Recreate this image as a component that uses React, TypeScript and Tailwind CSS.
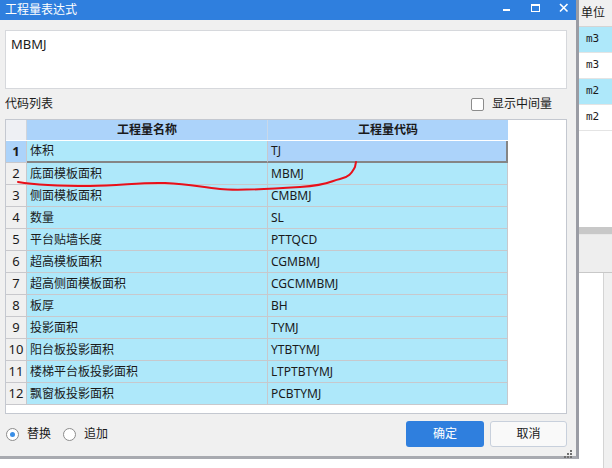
import React from "react";

const rows = [
  { name: "体积", code: "TJ" },
  { name: "底面模板面积", code: "MBMJ" },
  { name: "侧面模板面积", code: "CMBMJ" },
  { name: "数量", code: "SL" },
  { name: "平台贴墙长度", code: "PTTQCD" },
  { name: "超高模板面积", code: "CGMBMJ" },
  { name: "超高侧面模板面积", code: "CGCMMBMJ" },
  { name: "板厚", code: "BH" },
  { name: "投影面积", code: "TYMJ" },
  { name: "阳台板投影面积", code: "YTBTYMJ" },
  { name: "楼梯平台板投影面积", code: "LTPTBTYMJ" },
  { name: "飘窗板投影面积", code: "PCBTYMJ" },
];

const units = [
  { u: "m3", hl: true },
  { u: "m3", hl: false },
  { u: "m2", hl: true },
  { u: "m2", hl: false },
];

const font = { fontFamily: '"Noto Sans", "Noto Sans CJK SC", sans-serif' };

const TitleBar = () => (
  <div className="h-[20px] bg-[#2f7fde] flex items-center pl-[5px] text-white text-[12px] leading-none">
    <span>工程量表达式</span>
    <div className="ml-auto flex items-center h-full">
      <svg width="28" height="20" viewBox="0 0 28 20">
        <rect x="3" y="9" width="7" height="2" fill="#fff" />
      </svg>
      <svg width="28" height="20" viewBox="0 0 28 20">
        <rect x="3.5" y="4.5" width="8" height="7" fill="none" stroke="#fff" strokeWidth="1" />
        <rect x="3.5" y="4.5" width="8" height="1.5" fill="#fff" />
      </svg>
      <svg width="20" height="20" viewBox="0 0 20 20">
        <path d="M4 4 L11.5 11.5 M11.5 4 L4 11.5" stroke="#fff" strokeWidth="1.6" />
      </svg>
    </div>
  </div>
);

const CodeGrid = () => (
  <div className="h-[295px] border border-[#c4c8d0] bg-white flex flex-col">
    <div className="flex h-[21px] border-b border-[#ffffff]">
      <div className="w-[21px] bg-[#eef0f4] border-r border-[#d0d4da]" />
      <div className="w-[241px] bg-[#acd3fa] border-r border-[#c8d8ea] flex items-center justify-center font-bold text-[12px]">
        工程量名称
      </div>
      <div className="w-[240px] bg-[#acd3fa] flex items-center justify-center font-bold text-[12px]">
        工程量代码
      </div>
    </div>
    {rows.map((r, i) => {
      const sel = i === 0;
      return (
        <div key={i} className="flex h-[22px]">
          <div
            className={`w-[21px] border-r border-b border-[#c8c8cc] flex items-center justify-center text-[13px] ${
              sel ? "bg-[#acd3fa] font-bold" : "bg-[#f0f0f0]"
            }`}
          >
            {i + 1}
          </div>
          <div
            className={`w-[241px] bg-[#aee8fa] border-r border-[#c8c8cc] flex items-center pl-[3px] text-[12px] ${
              sel ? "border-b-2 border-b-[#858585]" : "border-b border-b-[#c8c8cc]"
            }`}
          >
            {r.name}
          </div>
          <div
            className={`w-[240px] flex items-center pl-[3px] text-[12px] ${
              sel
                ? "bg-[#acd3fa] border-b-2 border-r-2 border-[#858585]"
                : "bg-[#aee8fa] border-b border-r border-[#c8c8cc]"
            }`}
          >
            {r.code}
          </div>
        </div>
      );
    })}
  </div>
);

const Radio = ({ checked, label }: { checked: boolean; label: string }) => (
  <div className="flex items-center gap-[8px]">
    <div className="w-[13px] h-[13px] rounded-full border border-[#8c8c8c] bg-white flex items-center justify-center">
      {checked && <div className="w-[5px] h-[5px] rounded-full bg-[#3a8ee6]" />}
    </div>
    <span className="text-[12px]">{label}</span>
  </div>
);

const Dialog = () => (
  <div className="w-[579px] h-[459px] shrink-0 flex flex-col bg-[#f0f0f0] border-r-[3px] border-b-[3px] border-r-[#9a9ca4] border-b-[#a8aab0]">
    <TitleBar />
    <div className="flex flex-col pl-[5px] pr-[9px]">
      <div className="mt-[10px] h-[59px] bg-white border border-[#d6d8dc] px-[5px] pt-[4px] text-[13px]">
        MBMJ
      </div>
      <div className="h-[30px] flex items-center text-[12px]">
        <span>代码列表</span>
        <div className="ml-auto flex items-center gap-[8px] mr-[15px]">
          <div className="w-[13px] h-[13px] rounded-[2px] border border-[#8c8c8c] bg-white" />
          <span>显示中间量</span>
        </div>
      </div>
      <CodeGrid />
      <div className="flex items-center h-[40px]">
        <div className="flex items-center gap-[12px] pl-[1px]">
          <Radio checked label="替换" />
          <Radio checked={false} label="追加" />
        </div>
        <div className="ml-auto flex gap-[6px]">
          <button className="w-[78px] h-[26px] rounded-[3px] bg-[#2f7fde] text-white text-[12px]">确定</button>
          <button className="w-[77px] h-[26px] rounded-[3px] bg-[#f9f9f9] border border-[#c8d0dc] text-[12px]">取消</button>
        </div>
      </div>
    </div>
    <div className="flex justify-end pr-[4px] -mt-[4px]">
      <svg width="8" height="8" viewBox="0 0 8 8">
        <rect x="6" y="0" width="2" height="2" fill="#707070" />
        <rect x="3" y="3" width="2" height="2" fill="#707070" />
        <rect x="6" y="3" width="2" height="2" fill="#707070" />
        <rect x="0" y="6" width="2" height="2" fill="#707070" />
        <rect x="3" y="6" width="2" height="2" fill="#707070" />
        <rect x="6" y="6" width="2" height="2" fill="#707070" />
      </svg>
    </div>
  </div>
);

const SideStrip = () => (
  <div className="flex-1 flex flex-col bg-white">
    <div className="h-[27px] bg-[#f0f0f0] border-b border-[#d4d4d4] flex items-center pl-[2px] text-[12px]">单位</div>
    {units.map((u, i) => (
      <div
        key={i}
        className={`h-[26px] border-b border-[#e4e4e4] flex items-center pl-[7px] text-[11px] ${
          u.hl ? "bg-[#aee8fa]" : "bg-white"
        }`}
        style={{ fontFamily: '"DejaVu Sans Mono", monospace' }}
      >
        {u.u}
      </div>
    ))}
    <div className="h-[96px] bg-white" />
    <div className="h-[8px] bg-[#c8c8c8] border-b border-[#e8e8e8]" />
    <div className="h-[38px] bg-[#eeeeee] border-b border-[#c8c8c8]" />
    <div className="flex-1 flex">
      <div className="w-[25px] bg-white border-r border-[#d4d4d4]" />
      <div className="flex-1 bg-[#f0f0f0]" />
    </div>
  </div>
);

export default function App() {
  return (
    <div className="relative w-[612px] h-[468px] overflow-hidden bg-white flex text-[#1a1a1a]" style={font}>
      <div className="flex flex-col">
        <Dialog />
        <div className="flex-1 bg-white" />
      </div>
      <SideStrip />
      <svg className="absolute left-0 top-0 pointer-events-none" width="612" height="468">
        <path
          d="M18 182 C 30 184, 60 186, 90 186 S 140 182, 165 183 S 200 187, 220 189 S 270 189, 300 187 S 330 181, 340 179 S 352 172, 355 167 L 356 162"
          fill="none"
          stroke="#e8101a"
          strokeWidth="2"
          strokeLinecap="round"
        />
      </svg>
    </div>
  );
}
